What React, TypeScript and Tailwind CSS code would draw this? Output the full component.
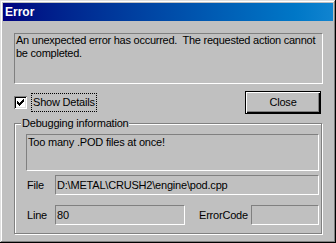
import React from 'react';

// Sunken read-only field (classic static edge)
function Field({ className, children }: { className?: string; children?: React.ReactNode }) {
  return (
    <div
      className={
        'border border-t-[#808080] border-l-[#808080] border-b-white border-r-white pl-[1px] whitespace-nowrap overflow-hidden ' +
        (className || '')
      }
    >
      {children}
    </div>
  );
}

export default function App() {
  return (
    <div
      className="w-[336px] h-[243px] bg-[#c0c0c0] p-[3px] flex flex-col text-[11px] leading-[13px] tracking-[-0.2px] text-black shadow-[inset_-1px_-1px_0_#000,inset_1px_1px_0_#dfdfdf,inset_-2px_-2px_0_#808080,inset_2px_2px_0_#fff]"
      style={{ fontFamily: '"Liberation Sans", Arial, sans-serif' }}
    >
      {/* Title bar */}
      <div className="h-[18px] flex items-center pl-[2px] bg-linear-to-r from-[#000080] to-[#1084d0] text-white font-bold text-[12px] tracking-normal">
        Error
      </div>

      {/* Body */}
      <div className="flex flex-col pl-[11px] pr-[10px]">
        {/* Message */}
        <Field className="mt-[12px] h-[51px] whitespace-pre tracking-[-0.25px]">
          {'An unexpected error has occurred.  The requested action cannot\nbe completed.'}
        </Field>

        {/* Checkbox + Close */}
        <div className="mt-[7px] flex items-center justify-between mr-[2px]">
          <div className="flex items-center">
            <div className="w-[13px] h-[13px] bg-white shadow-[inset_1px_1px_0_#808080,inset_-1px_-1px_0_#fff,inset_2px_2px_0_#000,inset_-2px_-2px_0_#dfdfdf] flex items-center justify-center">
              <svg width="7" height="7" viewBox="0 0 7 7" shapeRendering="crispEdges">
                <path d="M0 2h1v1h1v1h1v-1h1v-1h1v-1h1v-1h1v3h-1v1h-1v1h-1v1h-1v1h-1v-1h-1v-1h-1v-1h-1z" fill="#000" />
              </svg>
            </div>
            <div className="ml-[4px] px-[1px] py-[2px] border border-dotted border-black">Show Details</div>
          </div>
          <div className="w-[76px] h-[23px] border border-black flex">
            <div className="flex-1 flex items-center justify-center shadow-[inset_1px_1px_0_#fff,inset_-1px_-1px_0_#000,inset_-2px_-2px_0_#808080]">
              Close
            </div>
          </div>
        </div>

        {/* Group box */}
        <div className="relative mt-[9px] w-[308px] border border-[#808080] shadow-[1px_1px_0_#fff,inset_1px_1px_0_#fff] pl-[11px] pr-[2px] pt-[10px] pb-[8px] flex flex-col">
          <div className="absolute left-[6px] top-[-7px] bg-[#c0c0c0] px-[1px]">Debugging information</div>

          <Field className="h-[37px] pt-[1px]">Too many .POD files at once!</Field>

          <div className="mt-[4px] flex items-center">
            <div className="w-[29px] pl-[1px]">File</div>
            <Field className="flex-1 h-[20px] flex items-center">D:\METAL\CRUSH2\engine\pod.cpp</Field>
          </div>

          <div className="mt-[10px] flex items-center">
            <div className="w-[29px] pl-[1px]">Line</div>
            <Field className="w-[130px] h-[20px] flex items-center">80</Field>
            <div className="ml-[13px] w-[53px] pl-[1px]">ErrorCode</div>
            <Field className="flex-1 h-[20px]" />
          </div>
        </div>
      </div>
    </div>
  );
}
